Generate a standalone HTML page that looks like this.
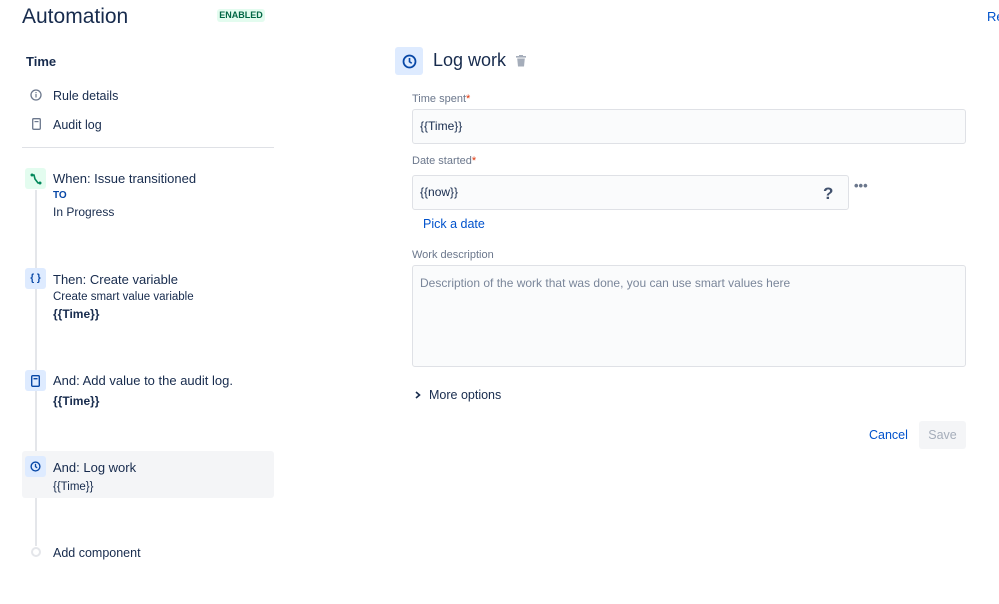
<!DOCTYPE html>
<html><head><style>
*{margin:0;padding:0;box-sizing:border-box}
body{width:999px;height:604px;background:#fff;font-family:"Liberation Sans",sans-serif;color:#172b4d;position:relative;overflow:hidden}
.a{position:absolute;white-space:nowrap}
.ic{position:absolute;width:21px;height:21px;border-radius:3px;display:flex;align-items:center;justify-content:center}
.inp{position:absolute;background:#fafbfc;border:1px solid #dfe1e6;border-radius:3px;font-size:12px;color:#172b4d;padding-left:7px}
.lbl{position:absolute;font-size:11px;color:#6b778c}
.lbl b{color:#de350b;font-weight:normal}
</style></head><body>
<div class="a" style="left:22px;top:5px;font-size:21px;color:#172b4d">Automation</div>
<div class="a" style="left:217px;top:9px;width:48px;height:13px;background:#e3fcef;color:#006644;font-size:9px;font-weight:bold;text-align:center;line-height:13px;border-radius:3px">ENABLED</div>
<div class="a" style="left:987px;top:9px;font-size:13px;color:#0052cc">Re</div>

<div class="a" style="left:26px;top:54px;font-size:13px;font-weight:bold;color:#172b4d">Time</div>
<svg class="a" style="left:30px;top:89px" width="12" height="12" viewBox="0 0 12 12"><circle cx="6" cy="6" r="5" fill="none" stroke="#6b778c" stroke-width="1.3"/><rect x="5.4" y="5" width="1.2" height="3.5" fill="#6b778c"/><rect x="5.4" y="3" width="1.2" height="1.2" fill="#6b778c"/></svg>
<div class="a" style="left:53px;top:89px;font-size:12.5px">Rule details</div>
<svg class="a" style="left:32px;top:118px" width="9" height="12" viewBox="0 0 9 12"><rect x="0.7" y="0.7" width="7.6" height="10.6" rx="1" fill="none" stroke="#6b778c" stroke-width="1.3"/><rect x="2.5" y="3" width="4" height="1.2" fill="#6b778c"/></svg>
<div class="a" style="left:53px;top:118px;font-size:12.5px">Audit log</div>
<div class="a" style="left:22px;top:147px;width:252px;height:1px;background:#dfe1e6"></div>

<div class="a" style="left:35px;top:190px;width:2px;height:356px;background:#e4e6ea"></div>
<div class="a" style="left:22px;top:451px;width:252px;height:47px;background:#f4f5f7;border-radius:3px"></div>

<div class="ic" style="left:25px;top:168px;background:#e3fcef"><svg width="12" height="12" viewBox="0 0 12 12"><path d="M2 2 L4 2 L5 6 L8 10 L10 10" fill="none" stroke="#00875a" stroke-width="1.6"/><circle cx="2" cy="2" r="1.5" fill="#00875a"/><circle cx="10" cy="10" r="1.5" fill="#00875a"/></svg></div>
<div class="a" style="left:53px;top:171px;font-size:13px">When: Issue transitioned</div>
<div class="a" style="left:53px;top:190px;font-size:10px;font-weight:bold;color:#0747a6">TO</div>
<div class="a" style="left:53px;top:205px;font-size:12px">In Progress</div>

<div class="ic" style="left:25px;top:268px;background:#deebff;font-size:10px;font-weight:bold;color:#0747a6">{ }</div>
<div class="a" style="left:53px;top:272px;font-size:13px">Then: Create variable</div>
<div class="a" style="left:53px;top:291px;font-size:11.5px">Create smart value variable</div>
<div class="a" style="left:53px;top:307px;font-size:12px;font-weight:bold">{{Time}}</div>

<div class="ic" style="left:25px;top:370px;background:#deebff"><svg width="9" height="12" viewBox="0 0 9 12"><rect x="0.7" y="0.7" width="7.6" height="10.6" rx="1" fill="none" stroke="#0747a6" stroke-width="1.4"/><rect x="2.5" y="3" width="4" height="1.4" fill="#0747a6"/></svg></div>
<div class="a" style="left:53px;top:373px;font-size:13px">And: Add value to the audit log.</div>
<div class="a" style="left:53px;top:394px;font-size:12px;font-weight:bold">{{Time}}</div>

<div class="ic" style="left:25px;top:456px;background:#deebff"><svg width="11" height="11" viewBox="0 0 12 12"><circle cx="6" cy="6" r="4.8" fill="none" stroke="#0747a6" stroke-width="1.5"/><path d="M6 3.2V6.2L7.8 7.4" fill="none" stroke="#0747a6" stroke-width="1.4"/></svg></div>
<div class="a" style="left:53px;top:460px;font-size:13px">And: Log work</div>
<div class="a" style="left:53px;top:481px;font-size:11.5px">{{Time}}</div>

<div class="a" style="left:31px;top:547px;width:10px;height:10px;border-radius:50%;border:2px solid #e4e6ea;background:#fff"></div>
<div class="a" style="left:53px;top:546px;font-size:12.5px">Add component</div>

<div class="a" style="left:395px;top:47px;width:28px;height:28px;background:#deebff;border-radius:3px;display:flex;align-items:center;justify-content:center"><svg width="15" height="15" viewBox="0 0 12 12"><circle cx="6" cy="6" r="4.8" fill="none" stroke="#0747a6" stroke-width="1.4"/><path d="M6 3.2V6.2L7.8 7.4" fill="none" stroke="#0747a6" stroke-width="1.3"/></svg></div>
<div class="a" style="left:433px;top:50px;font-size:18px">Log work</div>
<svg class="a" style="left:516px;top:55px" width="10" height="12" viewBox="0 0 10 12"><rect x="0" y="1" width="10" height="1.6" fill="#a5adba"/><rect x="3" y="0" width="4" height="1.5" fill="#a5adba"/><path d="M1.2 3.5H8.8L8 11.5H2Z" fill="#a5adba"/></svg>

<div class="lbl" style="left:412px;top:93px">Time spent<b>*</b></div>
<div class="inp" style="left:412px;top:109px;width:554px;height:35px;line-height:33px">{{Time}}</div>
<div class="lbl" style="left:412px;top:155px">Date started<b>*</b></div>
<div class="inp" style="left:412px;top:175px;width:437px;height:35px;line-height:33px">{{now}}</div>
<div class="a" style="left:823px;top:184px;font-size:17px;font-weight:bold;color:#42526e">?</div>
<div class="a" style="left:854px;top:178px;font-size:13px;font-weight:bold;color:#6b778c">•••</div>
<div class="a" style="left:423px;top:217px;font-size:12.5px;color:#0052cc">Pick a date</div>
<div class="lbl" style="left:412px;top:249px">Work description</div>
<div class="inp" style="left:412px;top:265px;width:554px;height:102px;padding-top:10px;color:#7a869a">Description of the work that was done, you can use smart values here</div>

<svg class="a" style="left:415px;top:391px" width="6" height="8" viewBox="0 0 6 8"><path d="M1 1L4.5 4L1 7" fill="none" stroke="#172b4d" stroke-width="1.6"/></svg>
<div class="a" style="left:429px;top:388px;font-size:12.5px">More options</div>
<div class="a" style="left:869px;top:428px;font-size:12.5px;color:#0052cc">Cancel</div>
<div class="a" style="left:919px;top:421px;width:47px;height:28px;background:#f4f5f7;border-radius:3px;color:#a5adba;font-size:12.5px;text-align:center;line-height:28px">Save</div>
</body></html>
